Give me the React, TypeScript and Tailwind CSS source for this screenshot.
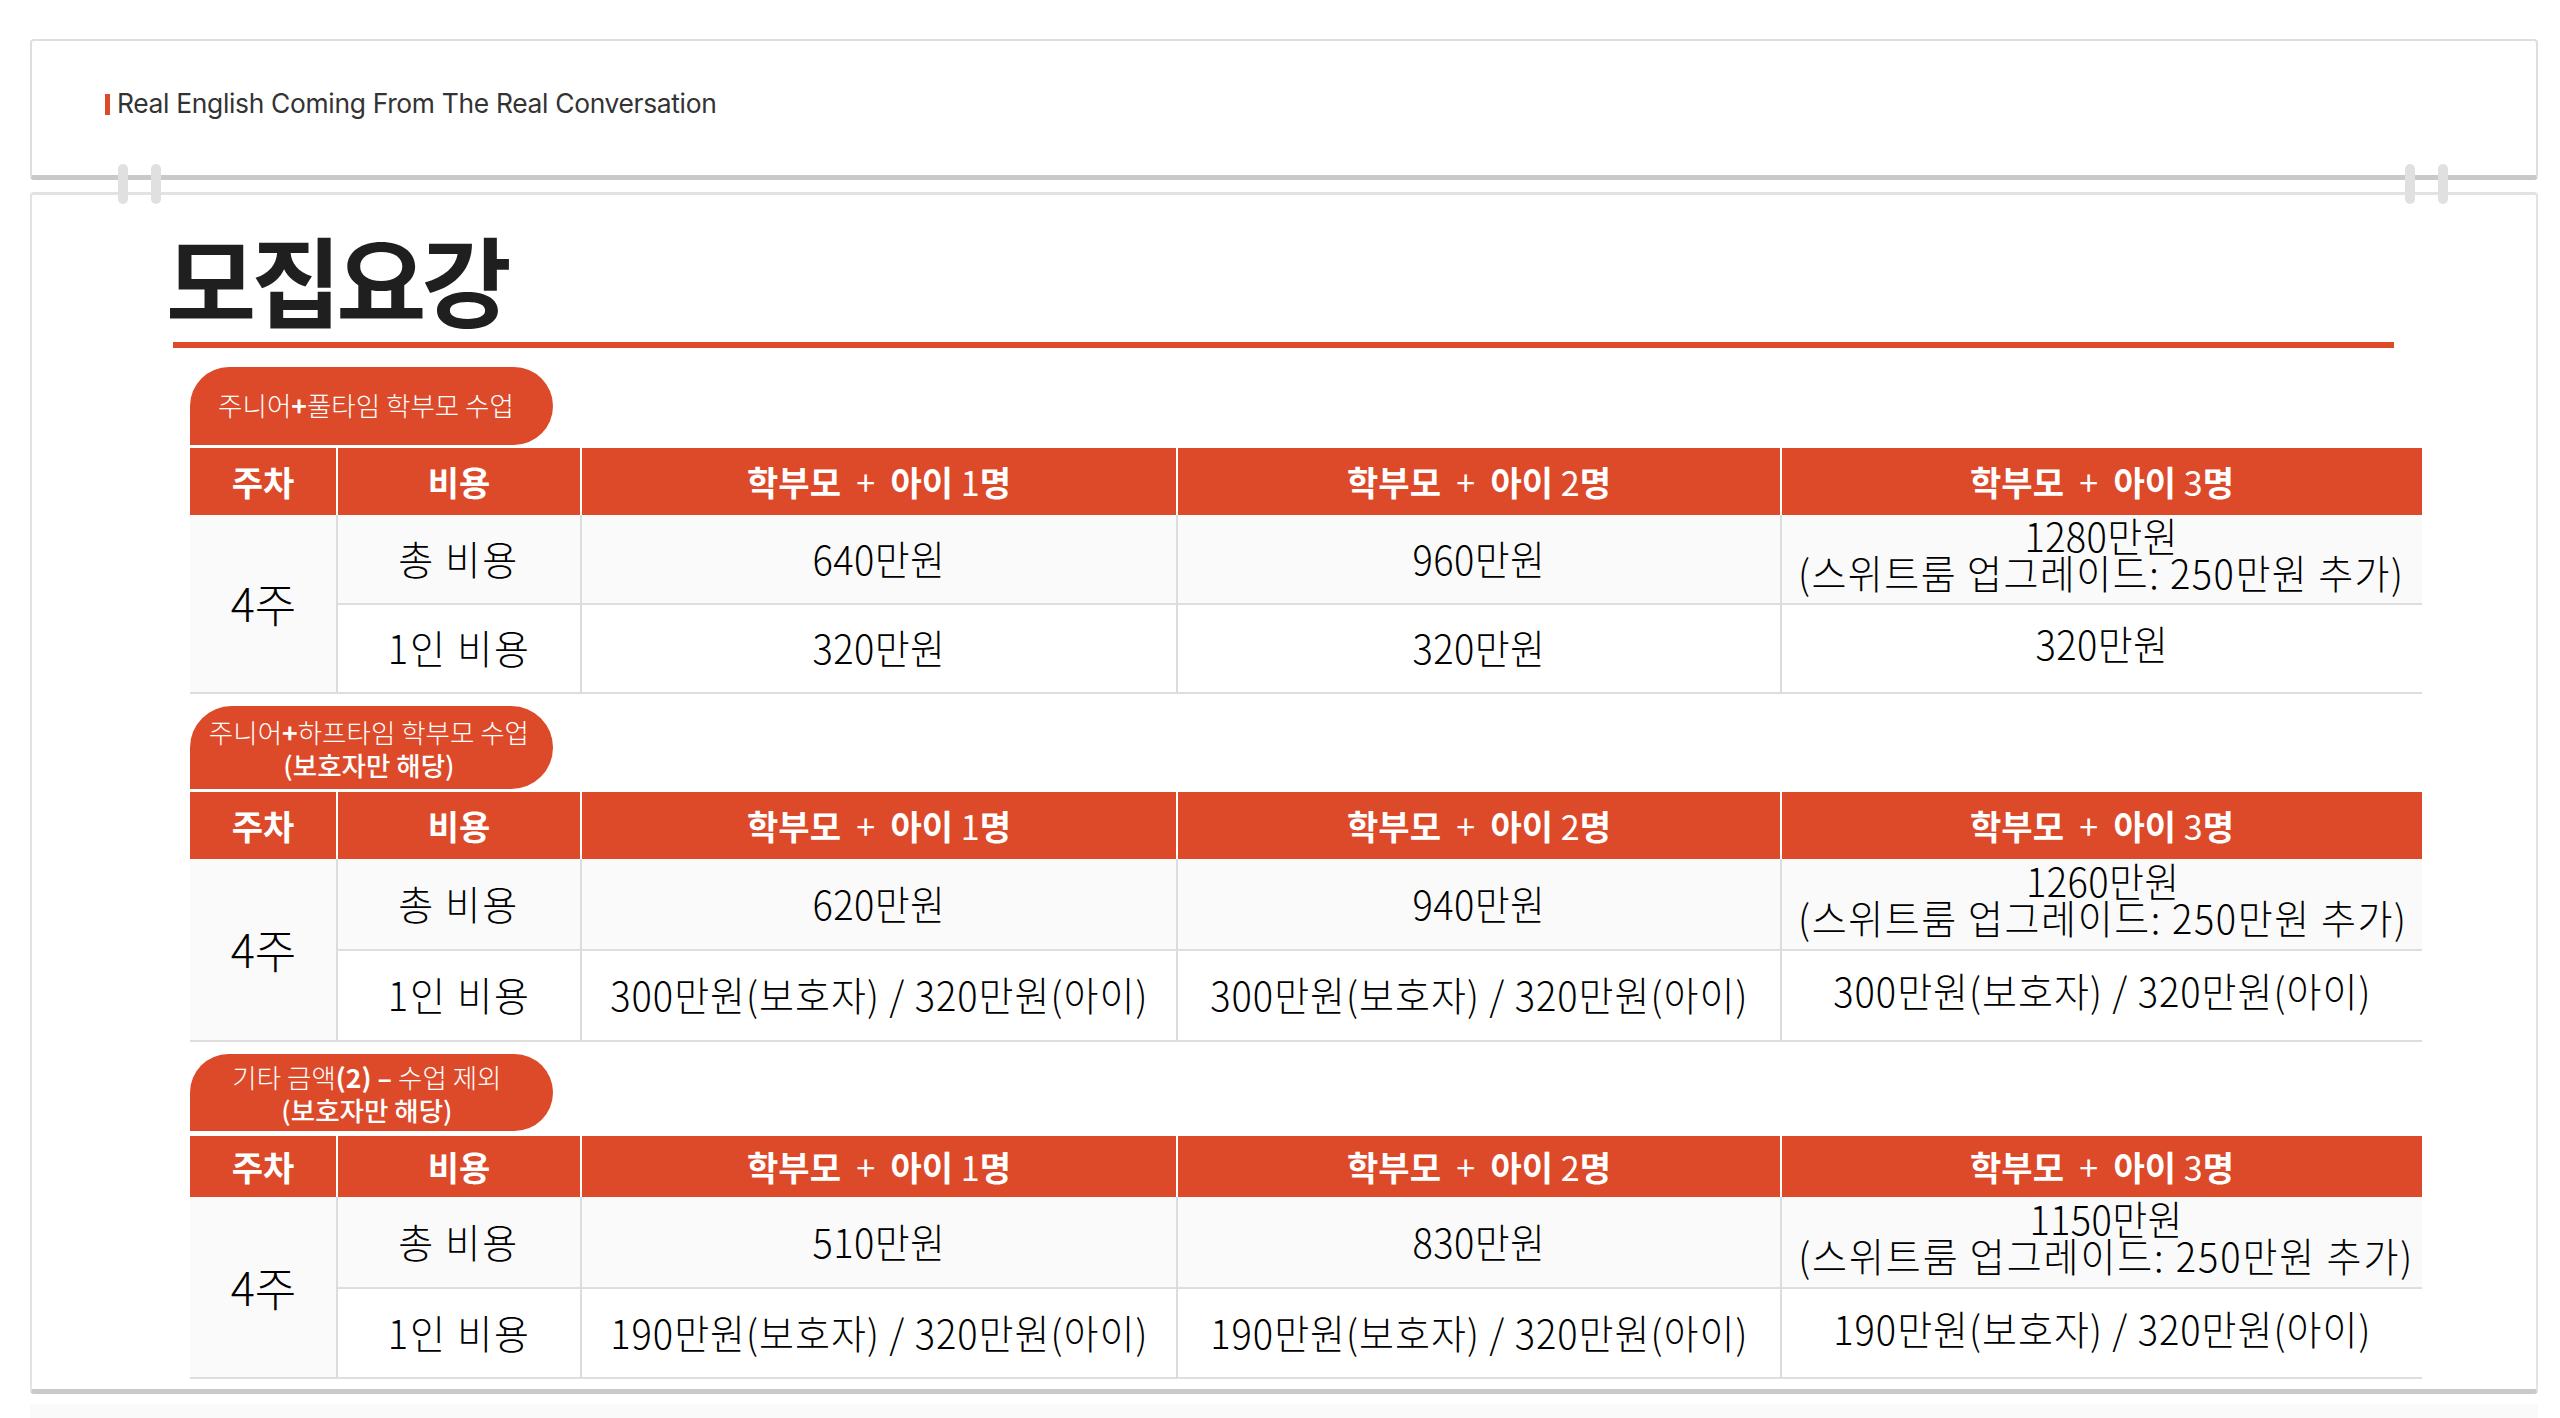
import React from 'react';

const KR = "font-['Noto_Sans_CJK_KR',sans-serif]";

type Plan = {
  pill: React.ReactNode;
  pillClass: string;
  tableClass: string;
  headerClass: string;
  row1Class: string;
  row2Class: string;
  totals: [string, string, string];
  upgradeClass: string;
  perHead: string;
  perHeadClass: string;
};

const plans: Plan[] = [
  {
    pill: (
      <span>
        주니어<b className="font-bold">+</b>풀타임 학부모 수업
      </span>
    ),
    pillClass: 'h-[78px] mt-[19px] pb-[4px] pr-[12px]',
    tableClass: 'mt-[3px]',
    headerClass: 'h-[67px]',
    row1Class: 'h-[89px]',
    row2Class: 'h-[89px]',
    totals: ['640만원', '960만원', '1280만원'],
    upgradeClass: 'tracking-[1.55px]',
    perHead: '320만원',
    perHeadClass: 'tracking-[0.4px]',
  },
  {
    pill: (
      <span>
        주니어<b className="font-bold">+</b>하프타임 학부모 수업
        <br />
        <span className="font-medium">(보호자만 해당)</span>
      </span>
    ),
    pillClass: 'h-[83px] mt-[12px] pr-[6px]',
    tableClass: 'mt-[3px]',
    headerClass: 'h-[67px]',
    row1Class: 'h-[91px]',
    row2Class: 'h-[91px]',
    totals: ['620만원', '940만원', '1260만원'],
    upgradeClass: 'tracking-[1.7px]',
    perHead: '300만원(보호자) / 320만원(아이)',
    perHeadClass: 'tracking-[1.05px]',
  },
  {
    pill: (
      <span>
        기타 금액<b className="font-bold">(2) – </b>수업 제외
        <br />
        <span className="font-medium">(보호자만 해당)</span>
      </span>
    ),
    pillClass: 'h-[77px] mt-[12px] pr-[10px]',
    tableClass: 'mt-[5px]',
    headerClass: 'h-[61px]',
    row1Class: 'h-[91px]',
    row2Class: 'h-[90px]',
    totals: ['510만원', '830만원', '1150만원'],
    upgradeClass: 'tracking-[2px]',
    perHead: '190만원(보호자) / 320만원(아이)',
    perHeadClass: 'tracking-[1.05px]',
  },
];

function HeadCell({ children }: { children: React.ReactNode }) {
  return (
    <th className="border-l-2 border-white first:border-l-0 bg-[#dd4a2a] p-0 text-center text-[34px] font-bold text-white">
      <span className="inline-block whitespace-pre leading-none">{children}</span>
    </th>
  );
}

function Parents({ n }: { n: number }) {
  return (
    <>
      학부모 <span className="font-normal">{' + '}</span> 아이 <span className="font-normal">{n}</span>명
    </>
  );
}

function Cell({ children, className = 'pb-[2px]', textClass = 'tracking-[0.4px]' }: { children: React.ReactNode; className?: string; textClass?: string }) {
  return (
    <td className={`border-l-2 border-[#dcdcdc] pt-0 pl-0 text-center text-[40px] leading-[37px] font-light text-black ${className}`}>
      <span className={`inline-block scale-x-[0.95] whitespace-nowrap ${textClass}`}>{children}</span>
    </td>
  );
}

function PlanTable({ plan }: { plan: Plan }) {
  return (
    <section className="ml-[19px]">
      <div
        className={`flex w-[363px] items-center justify-center rounded-tl-[44px] rounded-tr-[44px] rounded-br-[44px] bg-[#dd4a2a] text-center text-[26px] leading-[33px] font-light text-white ${plan.pillClass}`}
      >
        <div className="scale-x-[1.02] whitespace-nowrap">{plan.pill}</div>
      </div>
      <table className={`w-[2232px] table-fixed border-collapse ${plan.tableClass}`}>
        <colgroup>
          <col className="w-[147px]" />
          <col className="w-[244px]" />
          <col className="w-[596px]" />
          <col className="w-[604px]" />
          <col className="w-[641px]" />
        </colgroup>
        <thead>
          <tr className={plan.headerClass}>
            <HeadCell>주차</HeadCell>
            <HeadCell>비용</HeadCell>
            <HeadCell><Parents n={1} /></HeadCell>
            <HeadCell><Parents n={2} /></HeadCell>
            <HeadCell><Parents n={3} /></HeadCell>
          </tr>
        </thead>
        <tbody>
          <tr className={`border-b-2 border-[#dedede] bg-[#fafafa] ${plan.row1Class}`}>
            <td rowSpan={2} className="border-b-2 border-[#dedede] bg-[#fafafa] px-0 pt-0 pb-[3px] text-center text-[46px] leading-none font-light text-black">
              <span className="inline-block scale-x-[0.98]">4주</span>
            </td>
            <Cell textClass="tracking-[2px]">총 비용</Cell>
            <Cell>{plan.totals[0]}</Cell>
            <Cell>{plan.totals[1]}</Cell>
            <Cell className="pr-[5px] pb-[10px]">
              {plan.totals[2]}
              <br />
              <span className={plan.upgradeClass}>(스위트룸 업그레이드: 250만원 추가)</span>
            </Cell>
          </tr>
          <tr className={`border-b-2 border-[#dedede] bg-white ${plan.row2Class}`}>
            <Cell textClass="tracking-[2px]">1인 비용</Cell>
            <Cell textClass={plan.perHeadClass}>{plan.perHead}</Cell>
            <Cell textClass={plan.perHeadClass}>{plan.perHead}</Cell>
            <Cell className="pb-[10px]" textClass={plan.perHeadClass}>{plan.perHead}</Cell>
          </tr>
        </tbody>
      </table>
    </section>
  );
}

function Rings({ className }: { className: string }) {
  return (
    <div className={`absolute top-[-31px] flex gap-[23px] ${className}`}>
      <div className="h-[40px] w-[10px] rounded-full bg-[#e0e0e0]" />
      <div className="h-[40px] w-[10px] rounded-full bg-[#e0e0e0]" />
    </div>
  );
}

export default function App() {
  return (
    <div className={`h-[1418px] overflow-hidden bg-white pt-[39px] pl-[30px] ${KR}`}>
      <div className="flex h-[141px] w-[2508px] items-center rounded-[4px] border-2 border-b-[5px] border-[#dedede] border-b-[#c9c9c9] pb-[8px] pl-[73px]">
        <span className="mr-[7px] h-[21px] w-[5px] bg-[#dd4a2a]" />
        <span className="font-['Inter',sans-serif] text-[26.4px] tracking-[-0.32px] text-[#333]">
          Real English Coming From The Real Conversation
        </span>
      </div>
      <div className="relative mt-[12px] h-[1202px] w-[2508px] rounded-[4px] border-2 border-t-[3px] border-b-[5px] border-[#e2e2e2] border-b-[#c9c9c9] pl-[139px]">
        <Rings className="left-[86px]" />
        <Rings className="left-[2373px]" />
        <h1 className="ml-[-5px] h-[147px] pt-[27px] text-[98px] leading-[110px] font-bold tracking-[-5px] text-[#1f1f1f]">모집요강</h1>
        <div className="ml-[2px] h-[6px] w-[2221px] bg-[#dd4a2a]" />
        {plans.map((plan, i) => (
          <PlanTable key={i} plan={plan} />
        ))}
      </div>
      <div className="mt-[10px] h-[20px] w-[2508px] bg-[#fafafa]" />
    </div>
  );
}
